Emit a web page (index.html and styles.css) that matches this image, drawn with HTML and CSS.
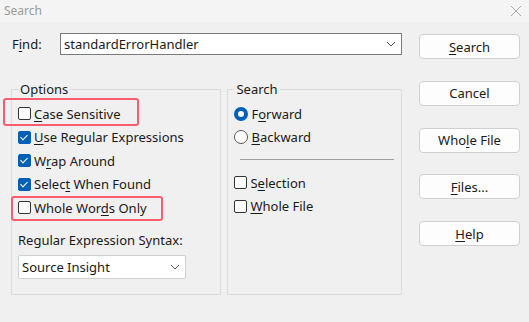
FILE: index.html
```html
<!DOCTYPE html>
<html lang="en">

<head>
    <meta charset="UTF-8">
    <title>Search</title>
    <link rel="stylesheet" href="styles.css">
</head>

<body>
    <div class="window">
        <header class="titlebar">
            <span class="title">Search</span>
            <svg class="close" width="12" height="12" viewBox="0 0 12 12">
                <path d="M1 1 L11 11 M11 1 L1 11" stroke="#a8a8a8" stroke-width="1" fill="none"/>
            </svg>
        </header>

        <div class="dialog">
            <div class="left">
                <div class="find-row">
                    <label class="find-label">F<u>i</u>nd:</label>
                    <div class="combo">
                        <span class="combo-text">standardErrorHandler</span>
                        <svg class="chevron" width="10" height="6" viewBox="0 0 10 6">
                            <path d="M1 1 L5 5 L9 1" stroke="#555" fill="none"/>
                        </svg>
                    </div>
                </div>

                <div class="groups">
                    <fieldset class="group options">
                        <legend>Options</legend>
                        <div class="row mark mark-case"><span class="check"></span><span><u>C</u>ase Sensitive</span></div>
                        <div class="row"><span class="check on"></span><span><u>U</u>se Regular Expressions</span></div>
                        <div class="row"><span class="check on"></span><span>W<u>r</u>ap Around</span></div>
                        <div class="row"><span class="check on"></span><span>Selec<u>t</u> When Found</span></div>
                        <div class="row mark mark-words"><span class="check"></span><span>Whole Wor<u>d</u>s Only</span></div>
                        <div class="syntax-label">Regular Expression Syntax:</div>
                        <div class="select">
                            <span>Source Insight</span>
                            <svg class="chevron" width="10" height="6" viewBox="0 0 10 6">
                                <path d="M1 1 L5 5 L9 1" stroke="#555" fill="none"/>
                            </svg>
                        </div>
                    </fieldset>

                    <fieldset class="group direction">
                        <legend>Search</legend>
                        <div class="row"><span class="radio on"></span><span>F<u>o</u>rward</span></div>
                        <div class="row"><span class="radio"></span><span><u>B</u>ackward</span></div>
                        <div class="divider"></div>
                        <div class="row"><span class="check"></span><span>S<u>e</u>lection</span></div>
                        <div class="row"><span class="check"></span><span><u>W</u>hole File</span></div>
                    </fieldset>
                </div>
            </div>

            <div class="buttons">
                <button class="btn"><u>S</u>earch</button>
                <button class="btn">Cancel</button>
                <button class="btn">Who<u>l</u>e File</button>
                <button class="btn"><u>F</u>iles...</button>
                <button class="btn"><u>H</u>elp</button>
            </div>
        </div>
    </div>
</body>

</html>
```

FILE: styles.css
```css
* {
    margin: 0;
    padding: 0;
    box-sizing: border-box;
}

body {
    background-color: #f0f0f0;
    color: #1a1a1a;
    font-family: "Noto Sans", "Liberation Sans", sans-serif;
    font-size: 13px;
    line-height: 18px;
}

u {
    text-decoration-thickness: 1px;
    text-underline-offset: 2px;
}

.window {
    width: 529px;
    height: 322px;
    overflow: hidden;
}

/* Title bar */
.titlebar {
    height: 22px;
    background: #f4f4f4;
    display: flex;
    justify-content: space-between;
    align-items: center;
    padding: 0 4px 0 4px;
}

.titlebar .title {
    font-size: 12px;
    color: #9a9a9a;
}

.titlebar .close {
    margin-right: 3px;
}

/* Dialog body */
.dialog {
    display: flex;
    gap: 17px;
    padding: 11px 9px 0 11px;
}

.left {
    width: 391px;
}

.find-row {
    display: flex;
    align-items: center;
    height: 22px;
}

.find-label {
    width: 49px;
    padding-left: 1px;
}

.combo {
    flex: 1;
    height: 22px;
    background: #fff;
    border: 1px solid #7a7a7a;
    display: flex;
    align-items: center;
    justify-content: space-between;
    padding: 0 5px 0 3px;
}

.groups {
    display: flex;
    gap: 6px;
    margin-top: 25px;
}

/* Group boxes */
.group {
    border: 1px solid #dcdcdc;
    padding: 4px 6px 15px 6px;
    min-width: 0;
}

.group legend {
    padding: 0 2px;
    line-height: 18px;
}

.options {
    width: 211px;
}

.direction {
    width: 175px;
}

.row {
    height: 23.5px;
    display: flex;
    align-items: center;
    gap: 3px;
    white-space: nowrap;
}

/* red annotation frames */
.mark {
    position: relative;
}

.mark::after {
    content: '';
    position: absolute;
    border: 2.5px solid #fd5b6f;
    border-radius: 3px;
}

.mark-case::after {
    left: -15px;
    width: 132px;
    top: -4px;
    bottom: 0;
}

.mark-words::after {
    left: -7px;
    width: 148px;
    top: 0;
    bottom: -1px;
}

.check {
    width: 13px;
    height: 13px;
    border: 1px solid #333;
    border-radius: 2px;
    background: #fff;
    flex-shrink: 0;
    position: relative;
}

.check.on {
    background: #005fb8;
    border-color: #005fb8;
}

.check.on::after {
    content: '';
    position: absolute;
    left: 3px;
    top: 1px;
    width: 3px;
    height: 6px;
    border: solid #fff;
    border-width: 0 1px 1px 0;
    transform: rotate(45deg);
}

.radio {
    width: 14px;
    height: 14px;
    border: 1px solid #555;
    border-radius: 50%;
    background: #fff;
    flex-shrink: 0;
}

.radio.on {
    border: 4px solid #005fb8;
    background: #fff;
}

.divider {
    height: 1px;
    background: #a0a0a0;
    margin: 10px 1px 11px 6px;
}

.syntax-label {
    margin-top: 11px;
}

.select {
    margin-top: 6px;
    width: 168px;
    height: 24px;
    background: #fff;
    border: 1px solid #d0d0d0;
    border-radius: 2px;
    display: flex;
    align-items: center;
    justify-content: space-between;
    padding: 0 5px 0 3px;
}

/* Right hand buttons */
.buttons {
    width: 102px;
    display: flex;
    flex-direction: column;
    gap: 21.75px;
    padding-top: 1px;
}

.btn {
    height: 25px;
    background: #fdfdfd;
    border: 1px solid #d0d0d0;
    border-radius: 4px;
    font-family: inherit;
    font-size: 13px;
    color: #1a1a1a;
}
```
